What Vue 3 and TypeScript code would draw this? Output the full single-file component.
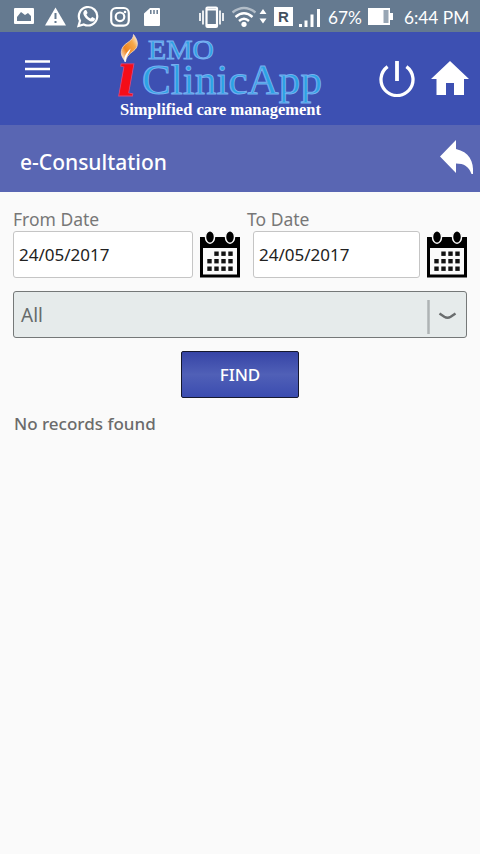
<script setup lang="ts">
import { ref } from 'vue'

interface DateField {
  id: string
  label: string
  value: string
}

const fields = ref<DateField[]>([
  { id: 'from', label: 'From Date', value: '24/05/2017' },
  { id: 'to', label: 'To Date', value: '24/05/2017' },
])
const category = ref<string>('All')
const calendarDots: number[][] = [
  [16.5, 22.500], [23.5, 22.500], [30.5, 22.500],
  [9.5, 30], [16.5, 30], [23.5, 30], [30.5, 30],
  [9.5, 37.500], [16.5, 37.500], [23.5, 37.500], [30.5, 37.500],
]
</script>

<template>
  <div class="screen">
    <div class="status">
      <div class="notices">
        <svg width="20" height="32" viewBox="14 0 20 32">
          <path fill="#fff" fill-rule="evenodd" d="M15 8h18q1 0 1 1v14q0 1-1 1H15q-1 0-1-1V9q0-1 1-1zM17 21h14v-5l-3-3-3 2-4-3-4 5z" />
        </svg>
        <svg width="21" height="32" viewBox="45 0 21 32">
          <path fill="#fff" d="M55.5 7.5 66 25.500H45z" />
          <path stroke="#657a90" stroke-width="2" d="M55.500 13v6M55.500 21v2" />
        </svg>
        <svg width="22" height="32" viewBox="77 0 22 32">
          <path fill="none" stroke="#fff" stroke-width="2.200" d="m78.500 26 1.500-5.300a9.200 9.200 0 1 1 3.800 3.700z" />
          <path fill="#fff" d="M84.500 10.500c1-.8 2-.4 2.300.4l.8 2-1.200 1.700c1 2 2.200 3.200 4.200 4l1.600-1.500 2.400 1.200c.8.5.2 2-.5 2.600-1.500 1.300-4.600.6-7.300-1.900-3-2.700-4.800-6.300-2.300-8.500z" />
        </svg>
        <svg width="20" height="32" viewBox="110 0 20 32">
          <g fill="none" stroke="#fff" stroke-width="2.200">
            <rect x="111.200" y="8" width="17.600" height="17.600" rx="5" />
            <circle cx="120" cy="16.800" r="4.300" />
          </g>
          <circle cx="125" cy="12" r="1.300" fill="#fff" />
        </svg>
        <svg class="card" width="16" height="32" viewBox="144 0 16 32">
          <path fill="#fff" d="M150 8h9q1 0 1 1v16q0 1-1 1h-14q-1 0-1-1V13.500z" />
          <path stroke="#657a90" stroke-width="1.500" d="M150.800 10v4M154 10v4M157.200 10v4" />
        </svg>
      </div>
      <div class="system">
        <svg width="26" height="32" viewBox="198 0 26 32">
          <path fill="none" stroke="#fff" stroke-width="1.700" d="M200 13v8M203 10.500v14M220 10.500v14M223 13v8" />
          <rect x="206.500" y="7.500" width="10.500" height="19.500" rx="1" fill="none" stroke="#fff" stroke-width="2.200" />
          <path stroke="#fff" stroke-width="2.200" d="M206 9.500h11M206 25h11" />
        </svg>
        <svg class="wifi" width="24" height="32" viewBox="232 0 24 32">
          <g fill="none" stroke="#fff" stroke-width="2.400">
            <path opacity=".5" d="M232.500 12.500q11.500-9 23 0" />
            <path d="M235.500 17q8.500-7.500 17 0M239 21q5-4.500 10 0" />
          </g>
          <circle cx="244" cy="24.300" r="2.600" fill="#fff" />
        </svg>
        <svg class="traffic" width="8" height="32" viewBox="259 0 8 32">
          <path fill="#fff" d="m263 9 3.500 5h-7zM263 23.500l3.500-5h-7z" />
        </svg>
        <span class="roaming">R</span>
        <svg class="signal" width="22" height="32" viewBox="299 0 22 32">
          <path fill="#fff" d="M299 24h3v3h-3zM304.500 20.500h3V27h-3zM310.500 14.500h3V27h-3zM317 9h3v18h-3z" />
        </svg>
        <span class="percent">67%</span>
        <svg class="battery" width="26" height="32" viewBox="368 0 26 32">
          <path fill="#fff" d="M368 8h22v17h-22zM390 13h3v7h-3z" />
          <path fill="#98a6b4" d="M383.500 10h5v13h-5z" />
        </svg>
        <span class="clock">6:44 PM</span>
      </div>
    </div>

    <header class="appbar">
      <button class="plain" aria-label="Menu">
        <svg width="25" height="20" viewBox="0 0 25 20"><path stroke="#fff" stroke-width="2.600" d="M0 2.500h25M0 10h25M0 17.300h25" /></svg>
      </button>
      <svg class="logo" width="210" height="93" viewBox="116 32 210 93">
        <defs>
          <linearGradient id="flame" x1="1" y1="0" x2="0" y2="1">
            <stop offset="0" stop-color="#fff" />
            <stop offset=".3" stop-color="#f5a94a" />
            <stop offset=".65" stop-color="#ee8420" />
            <stop offset="1" stop-color="#fff" />
          </linearGradient>
        </defs>
        <path fill="url(#flame)" stroke="#ffe6c8" stroke-width=".7" d="M133.500 34.500c3 4 5.500 9 2.700 13.500-2.500 4-9.700 6-10.700 13.500-4.500-5-5.500-9.800-2.600-14.500 3-4.800 10.500-6 10.600-12.500z" />
        <path fill="#fff" d="M124.600 62c-1.600-6 3-10.500 6-13.500-1 5-4.800 7.500-5 13.500z" />
        <text class="logo-i" x="117" y="95.500" textLength="20" lengthAdjust="spacingAndGlyphs">ı</text>
        <g class="logo-blue">
          <text x="148" y="59" font-size="28" textLength="66" lengthAdjust="spacingAndGlyphs">EMO</text>
          <text x="142" y="94" font-size="42" textLength="180" lengthAdjust="spacingAndGlyphs">ClinicApp</text>
        </g>
        <text class="tagline" x="120" y="115" textLength="201" lengthAdjust="spacingAndGlyphs">Simplified care management</text>
      </svg>
      <div class="actions">
        <button class="plain" aria-label="Sign out">
          <svg width="36" height="36" viewBox="0 0 36 36">
            <path fill="none" stroke="#fff" stroke-width="3.300" d="M8.600 5.600A16 16 0 1 0 27.400 5.600" />
            <path stroke="#fff" stroke-width="3.800" d="M18 0v20" />
          </svg>
        </button>
        <button class="plain" aria-label="Home">
          <svg width="38" height="34" viewBox="0 0 38 34"><path fill="#fff" d="M19 0 38 18h-5v16H23V22h-8v12H5.500V18H0z" /></svg>
        </button>
      </div>
    </header>

    <div class="titlebar">
      <h1>e-Consultation</h1>
      <button class="plain" aria-label="Back">
        <svg width="34" height="34" viewBox="0 0 34 34"><path fill="#fff" d="M0 16.500 16 0v9c13 3 18 12 17 25h-1.500C29 26.500 24 23.500 16 23.500V33z" /></svg>
      </button>
    </div>

    <main>
      <div class="dates">
        <div v-for="field in fields" :key="field.id" class="date" :class="field.id">
          <label :for="field.id">{{ field.label }}</label>
          <div class="picker">
            <input :id="field.id" v-model="field.value" type="text" />
            <svg width="40" height="47" viewBox="0 0 40 47">
              <path fill="#000" d="M0 6h40v40.500H0z" />
              <path fill="#fafafa" d="M3 17h34v26.500H3z" />
              <g fill="#000" stroke="#fafafa" stroke-width="1.500">
                <ellipse cx="10" cy="6" rx="4.500" ry="6.200" />
                <ellipse cx="30" cy="6" rx="4.500" ry="6.200" />
              </g>
              <rect v-for="(dot, i) in calendarDots" :key="i" :x="dot[0] - 2.200" :y="dot[1] - 2" width="4.400" height="4.400" fill="#111" />
            </svg>
          </div>
        </div>
      </div>
      <div class="select">
        <span>{{ category }}</span>
        <svg width="32" height="36" viewBox="0 0 32 36">
          <path stroke="#aeb3b4" stroke-width="2.500" d="M1.500 1v34" />
          <path fill="none" stroke="#6a6d6e" stroke-width="2.500" d="m12.500 14.500 4.800 3.200q3.200 2 6.400 0l4.800-3.200" />
        </svg>
      </div>
      <button class="find">FIND</button>
      <p class="empty">No records found</p>
    </main>
  </div>
</template>

<style>
body {
  margin: 0;
  background: #fafafa;
}
</style>

<style scoped>
.screen {
  width: 480px;
  height: 854px;
  overflow: hidden;
  background: #fafafa;
  font-family: "Noto Sans", sans-serif;
}
* { box-sizing: border-box; }
svg { display: block; flex: none; }
.plain {
  padding: 0;
  border: 0;
  background: none;
}
.status {
  display: flex;
  justify-content: space-between;
  height: 32px;
  padding: 0 10px 0 14px;
  background: #657a90;
  color: #fff;
}
.notices {
  display: flex;
  gap: 11px;
}
.card { margin-left: 3px; }
.system {
  display: flex;
  align-items: center;
}
.wifi { margin-left: 8px; }
.traffic { margin-left: 3px; }
.roaming {
  width: 19px;
  height: 19px;
  margin-left: 7px;
  background: #fff;
  color: #43505f;
  font: bold 15px/19px "Liberation Sans", sans-serif;
  text-align: center;
}
.signal { margin-left: 6px; }
.percent,
.clock {
  font-family: Lato, sans-serif;
  font-size: 17.300px;
  line-height: 32px;
  padding-top: 3px;
  white-space: nowrap;
}
.percent { width: 34px; margin-left: 7px; }
.battery { margin-left: 6px; }
.clock { width: 66px; margin-left: 10px; }
.appbar {
  display: grid;
  grid-template-columns: 91px 210px 1fr;
  height: 93px;
  padding: 0 11px 0 25px;
  background: #3d50b2;
}
.appbar > .plain {
  display: flex;
  padding-top: 27px;
}
.logo-i {
  font: italic bold 70px "Liberation Serif", serif;
  fill: #f50d18;
  stroke: #d64a83;
  stroke-width: .8px;
}
.logo-blue {
  font-family: "Liberation Serif", serif;
  fill: #2ba3e3;
  stroke: #77aef0;
  stroke-width: 1px;
}
.tagline {
  font: bold 17px "Liberation Serif", serif;
  fill: #fff;
}
.actions {
  display: flex;
  justify-content: flex-end;
  align-items: flex-start;
  gap: 16px;
  padding-top: 29px;
}
.titlebar {
  display: flex;
  align-items: center;
  justify-content: space-between;
  height: 67px;
  padding: 0 6px 4px 20px;
  background: #5966b3;
}
h1 {
  margin: 0;
  padding-top: 10px;
  color: #fff;
  font: 500 21px/28px "Noto Sans", sans-serif;
}
main {
  padding: 16px 13px;
}
.dates {
  display: flex;
  justify-content: space-between;
}
label {
  display: block;
  height: 23px;
  color: #777;
  font-size: 17.500px;
  line-height: 23px;
}
.to label { margin-left: -6px; }
.picker { display: flex; gap: 7px; }
input {
  width: 180px;
  height: 47px;
  padding: 0 5px;
  border: 1px solid #c5c5c5;
  border-radius: 3px;
  background: #fff;
  color: #222;
  font: 17px "Noto Sans", sans-serif;
}
.to input { width: 167px; }
.select {
  display: flex;
  align-items: center;
  justify-content: space-between;
  height: 47px;
  margin-top: 13px;
  padding: 0 7px;
  border: 1.500px solid #757878;
  border-radius: 3px;
  background: #e6ebeb;
  color: #666b6b;
  font-size: 19px;
}
.select svg { margin-top: 5px; }
.find {
  display: block;
  width: 118px;
  height: 47px;
  margin: 13px auto 0;
  padding: 0;
  border: 1.500px solid #15182e;
  border-radius: 2px;
  background: linear-gradient(#3644a6, #5060b7 50%, #3b4cb0);
  color: #fff;
  font: 500 17px "Noto Sans", sans-serif;
}
.empty {
  margin: 13px 0 0 1px;
  color: #6b6b6b;
  font-size: 17px;
  font-weight: 500;
  line-height: 26px;
}
</style>
